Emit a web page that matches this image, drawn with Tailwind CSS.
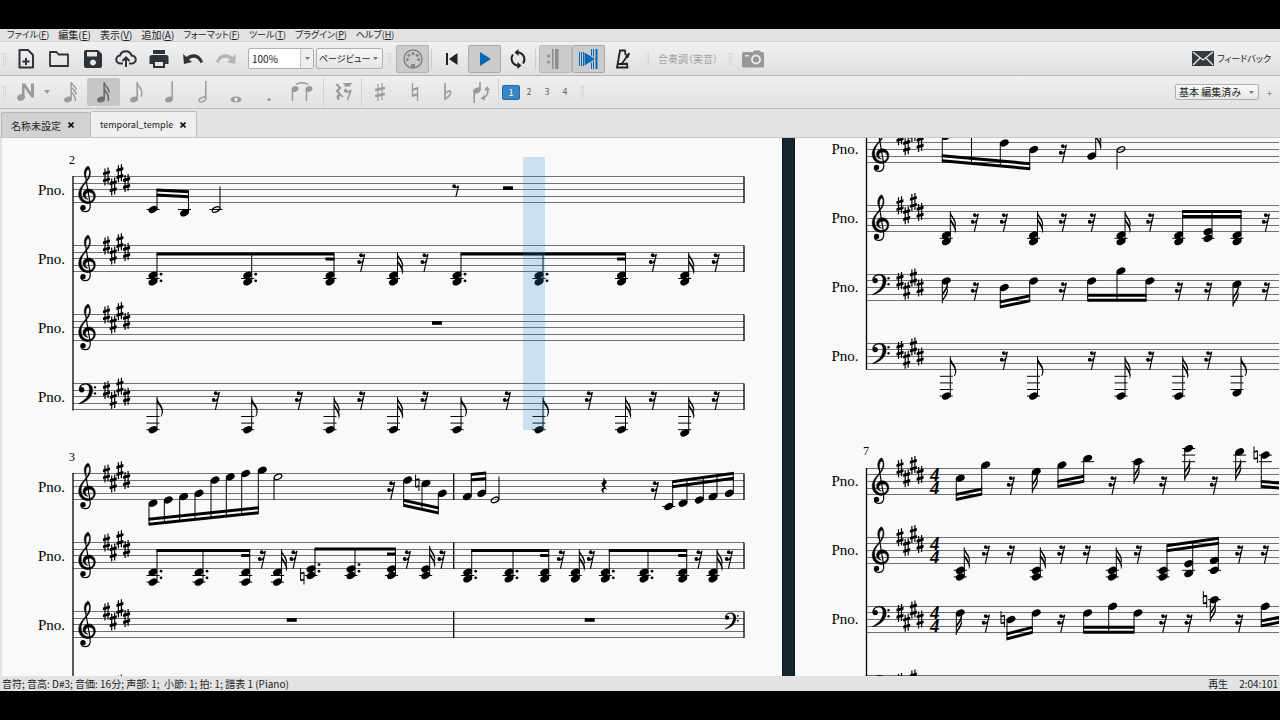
<!DOCTYPE html>
<html lang="ja">
<head>
    <meta charset="UTF-8">
    <meta name="viewport" content="width=device-width, initial-scale=1.0">
    <title>temporal_temple</title>
    <script src="https://cdn.jsdelivr.net/npm/@tailwindcss/browser@4"></script>
    <style>
        body { font-family: 'Noto Sans CJK JP', sans-serif; }
        .kana { font-feature-settings: "palt"; }
    </style>
</head>
<body class="h-screen bg-black py-[29px] flex flex-col overflow-hidden text-[10px] text-[#222]">
    <div class="flex-1 min-h-0 flex flex-col bg-[#e3e3e3]">
        <nav class="kana h-3 shrink-0 flex items-center gap-[9px] pl-[7px] text-[9px] leading-3 whitespace-nowrap">
            <button>ファイル(<u>F</u>)</button>
            <button class="text-[10px]">編集(<u>E</u>)</button>
            <button class="text-[10px]">表示(<u>V</u>)</button>
            <button class="text-[10px]">追加(<u>A</u>)</button>
            <button>フォーマット(<u>F</u>)</button>
            <button>ツール(<u>T</u>)</button>
            <button>プラグイン(<u>P</u>)</button>
            <button>ヘルプ(<u>H</u>)</button>
        </nav>

        <!-- Barra principal -->
        <div class="h-[35px] shrink-0 flex items-center border-t border-b border-t-[#d4d4d4] border-b-[#b5b5b5] bg-linear-to-b from-[#f1f1f1] to-[#dfdfdf]">
            <span class="w-[9px] flex justify-center"><i class="h-3 w-[3px] border-x border-dotted border-[#ccc]"></i></span>
            <div class="w-[234px] flex text-[#2d3338]">
                <button class="flex-1 flex justify-center" aria-label="New"><svg width="20" height="22" viewBox="0 0 20 22" fill="none" stroke="currentColor" stroke-width="2"><path d="M3.500 2h8.500l5 5v12.500h-13.500z" stroke-linejoin="round"/><path d="M10 10v7M6.500 13.500h7"/></svg></button>
                <button class="flex-1 flex justify-center" aria-label="Open"><svg width="20" height="22" viewBox="0 0 20 22" fill="none" stroke="currentColor" stroke-width="1.800" stroke-linejoin="round"><path d="M1 18V4h6.500l2 2.500H19V18H1z"/></svg></button>
                <button class="flex-1 flex justify-center" aria-label="Save"><svg width="20" height="22" viewBox="0 0 20 22" fill="currentColor"><path fill-rule="evenodd" d="M3 2h12l4 4v12a2 2 0 0 1-2 2H3a2 2 0 0 1-2-2V4a2 2 0 0 1 2-2zM4 4v4.500h10V4zM10 11.500a3 3 0 1 0 .01 0z"/></svg></button>
                <button class="flex-1 flex justify-center" aria-label="Upload"><svg width="22" height="22" viewBox="0 0 22 22" fill="none" stroke="currentColor" stroke-width="2"><path d="M8 15.500H5.500a4 4 0 0 1-.5-8A6 6 0 0 1 16.500 7.500a4 4 0 0 1 .5 8H14"/><path d="M11 19V9.500M7.500 13L11 9.500l3.500 3.500"/></svg></button>
                <button class="flex-1 flex justify-center" aria-label="Print"><svg width="20" height="22" viewBox="0 0 20 22" fill="currentColor"><path fill-rule="evenodd" d="M4 2h12v4H4zM3 7h14a2.500 2.500 0 0 1 2.500 2.500V16H16v4H4v-4H.5V9.500A2.500 2.500 0 0 1 3 7zM6 14v4h8v-4z"/></svg></button>
                <button class="flex-1 flex justify-center" aria-label="Undo"><svg width="20" height="22" viewBox="0 0 20 22"><path fill="currentColor" d="M0 6l1 10 8-2-3-2.500C10 8.500 15 9 17.500 15l2.500-1C17 5.500 9 4.500 3.500 9z"/></svg></button>
                <button class="flex-1 flex justify-center text-[#b5b5b5]" aria-label="Redo" disabled><svg width="20" height="22" viewBox="0 0 20 22"><path fill="currentColor" d="M20 6l-1 10-8-2 3-2.500C10 8.500 5 9 2.500 15L0 14C3 5.500 11 4.500 16.500 9z"/></svg></button>
            </div>
            <div class="ml-[5px] w-[66px] h-[21px] flex rounded-xs border border-[#b0b0b0] bg-white">
                <input type="text" value="100%" aria-label="Zoom" class="min-w-0 flex-1 pl-[3px] text-[10px] leading-none outline-none">
                <button class="w-[13px] flex items-center justify-center border-l border-[#c4c4c4] bg-[#eee]" aria-label="Zoom list"><svg width="5" height="3"><path fill="#777" d="M0 0h5L2.500 3z"/></svg></button>
            </div>
            <div class="relative ml-[2px] w-[67px] h-[21px]">
                <select aria-label="View" class="kana w-full h-full appearance-none rounded-xs border border-[#b0b0b0] bg-linear-to-b from-[#f8f8f8] to-[#e4e4e4] pl-[2px] text-[9px]"><option>ページビュー</option></select>
                <svg class="absolute right-[5px] top-[9px]" width="5" height="3"><path fill="#777" d="M0 0h5L2.500 3z"/></svg>
            </div>
            <span class="w-[13px] flex justify-center"><i class="h-3 w-[3px] border-x border-dotted border-[#ccc]"></i></span>
            <button class="w-[33px] h-[28px] flex items-center justify-center rounded-xs border border-[#b4b4b4] bg-[#cbcbcb]" aria-label="MIDI"><svg width="20" height="20" viewBox="0 0 20 20"><circle cx="10" cy="10" r="9" fill="none" stroke="#858585" stroke-width="1.500"/><g fill="#858585"><circle cx="10" cy="4.500" r="1.500"/><circle cx="5.800" cy="6.200" r="1.500"/><circle cx="14.200" cy="6.200" r="1.500"/><circle cx="4.300" cy="10.500" r="1.500"/><circle cx="15.700" cy="10.500" r="1.500"/><path d="M8 18v-3h4v3z"/></g></svg></button>
            <i class="mx-[2px] h-[20px] w-px bg-[#ccc]"></i>
            <button class="w-[34px] flex justify-center" aria-label="Rewind"><svg width="13" height="14" viewBox="0 0 13 14" fill="#222"><path d="M1 1h2v12H1zM12.500 1v12L4 7z"/></svg></button>
            <button class="w-[33px] h-[28px] flex items-center justify-center rounded-xs border border-[#aaa] bg-[#cbcbcb]" aria-label="Play"><svg width="12" height="14" viewBox="0 0 12 14"><path fill="#0868b8" d="M1 0l11 7L1 14z"/></svg></button>
            <button class="w-[34px] flex justify-center" aria-label="Loop"><svg width="18" height="20" viewBox="0 0 18 20" fill="none" stroke="#222" stroke-width="2"><path d="M14 14.500A7 7 0 0 0 10 3.500H8M4 5.500A7 7 0 0 0 8 16.500H10"/><path fill="#222" stroke="none" d="M9.500 0v7L5.500 3.500zM8.500 13v7l4-3.500z"/></svg></button>
            <i class="mr-[3px] h-[20px] w-px bg-[#ccc]"></i>
            <button class="w-[33px] h-[28px] flex items-center justify-center rounded-xs border border-[#bcbcbc] bg-[#cbcbcb]" aria-label="Repeats"><svg width="20" height="20" viewBox="0 0 20 20" fill="#8d8d8d"><circle cx="2.500" cy="7" r="1.500"/><circle cx="2.500" cy="13" r="1.500"/><path d="M6 0h1.500v20H6zM9 0h3.500v20H9z"/></svg></button>
            <button class="w-[33px] h-[28px] flex items-center justify-center rounded-xs border border-[#aaa] bg-[#cbcbcb]" aria-label="Pan score"><svg width="20" height="20" viewBox="0 0 20 20" fill="#0868b8"><path d="M0 3h1v14H0zM2 3h1v14H2zM4 3h1v14H4zM5.500 3.500L16 10 5.500 16.500zM16.500 0h2v20h-2zM12 0h1v7l-1-.6zM14 0h1v8l-1-.6zM12 13.500l1-.6V20h-1zM14 12l1-.6V20h-1z"/></svg></button>
            <button class="ml-px w-[34px] flex justify-center" aria-label="Metronome"><svg width="16" height="20" viewBox="0 0 16 20" fill="none" stroke="#222" stroke-width="1.800"><path d="M10.500 6L10 1.500H5L2 18.500h10.500l-.7-5M2.500 15h9M7 14.500L14.500 4"/><path d="M11 6l2.500 2" stroke-width="3"/></svg></button>
            <span class="w-[14px] flex justify-center"><i class="h-3 w-[3px] border-x border-dotted border-[#ccc]"></i></span>
            <button class="kana ml-1 whitespace-nowrap text-[10px] text-[#a3a3a3]" disabled>合奏調（実音）</button>
            <span class="w-[24px] flex justify-center"><i class="h-3 w-[3px] border-x border-dotted border-[#ccc]"></i></span>
            <button aria-label="Screenshot"><svg width="22" height="18" viewBox="0 0 22 18"><path fill="#979797" d="M1.500 2H11l1-1.500h6L19 2h1.500A1.500 1.500 0 0 1 22 3.500V16a1.500 1.500 0 0 1-1.500 1.500h-19A1.500 1.500 0 0 1 0 16V3.500A1.500 1.500 0 0 1 1.500 2z"/><circle cx="14" cy="9.500" r="4" fill="#979797" stroke="#e9e9e9" stroke-width="2"/><path fill="#e9e9e9" d="M3 5h4v1.500H3z"/></svg></button>
            <button class="kana ml-auto mr-[9px] flex items-center gap-[3px] whitespace-nowrap text-[9px]"><svg width="22" height="15" viewBox="0 0 22 15"><path fill="#343b40" d="M0 0h22v15H0z"/><path fill="none" stroke="#eee" stroke-width="1.300" d="M1 1l10 8L21 1M1 14l7-7M21 14l-7-7"/></svg>フィードバック</button>
        </div>

        <!-- Barra de notas -->
        <div class="h-[33px] shrink-0 flex items-center border-b border-[#bdbdbd] bg-linear-to-b from-[#efefef] to-[#e2e2e2] text-[#9a9a9a]">
            <span class="w-[9px] flex justify-center"><i class="h-3 w-[3px] border-x border-dotted border-[#ccc]"></i></span>
            <button class="w-[34px] flex justify-center" aria-label="Note input"><svg width="18" height="20" viewBox="0 0 18 20" fill="currentColor"><ellipse cx="4" cy="15.500" rx="4" ry="3.200" transform="rotate(-20 4 15.500)"/><path d="M5 1.500h3l6 9V1.500h3v14h-2.500L7.500 6v9.500H5z"/></svg></button>
            <svg class="mx-px" width="6" height="4"><path fill="currentColor" d="M0 0h6L3 4z"/></svg>
            <div class="w-[264px] flex items-center ml-[3px]">
                <button class="flex-1 flex justify-center" aria-label="32nd"><svg width="14" height="22" viewBox="0 0 14 22"><ellipse cx="4" cy="18.500" rx="4" ry="2.800" transform="rotate(-20 4 18.500)" fill="currentColor"/><path d="M7.200 1v17M7.200 1c.5 3 5 4 5 8M7.200 5.500c.5 3 5 4 5 8M7.200 10c.5 3 5.500 5 4 10" fill="none" stroke="currentColor" stroke-width="1.400"/></svg></button>
                <button class="flex-1 h-[28px] flex items-center justify-center rounded-xs bg-[#c6c6c6] text-[#6d6d6d]" aria-label="16th"><svg width="14" height="22" viewBox="0 0 14 22"><ellipse cx="4" cy="18.500" rx="4" ry="2.800" transform="rotate(-20 4 18.500)" fill="currentColor"/><path d="M7.200 1v17M7.200 1.500c.5 4 5 5 5 10M7.200 7c.5 4 5.500 6 4 13" fill="none" stroke="currentColor" stroke-width="1.700"/></svg></button>
                <button class="flex-1 flex justify-center" aria-label="8th"><svg width="14" height="22" viewBox="0 0 14 22"><ellipse cx="4" cy="18.500" rx="4" ry="2.800" transform="rotate(-20 4 18.500)" fill="currentColor"/><path d="M7.200 1v17M7.200 1.500c.5 5 7 6 4 14" fill="none" stroke="currentColor" stroke-width="1.500"/></svg></button>
                <button class="flex-1 flex justify-center" aria-label="Quarter"><svg width="10" height="22" viewBox="0 0 10 22"><ellipse cx="4" cy="18.500" rx="4" ry="2.800" transform="rotate(-20 4 18.500)" fill="currentColor"/><path d="M7.200 0v18" stroke="currentColor" stroke-width="1.500"/></svg></button>
                <button class="flex-1 flex justify-center" aria-label="Half"><svg width="10" height="22" viewBox="0 0 10 22" fill="none" stroke="currentColor" stroke-width="1.500"><ellipse cx="4.500" cy="18.500" rx="3.500" ry="2" transform="rotate(-25 4.500 18.500)"/><path d="M7.800 0v18"/></svg></button>
                <button class="flex-1 flex justify-center" aria-label="Whole"><svg width="12" height="22" viewBox="0 0 12 22"><path fill="currentColor" fill-rule="evenodd" d="M6 15.500c3 0 5.500 1 5.500 3s-2.500 3-5.500 3-5.500-1-5.500-3 2.500-3 5.500-3zM5.500 16.500c-2 .2-1.500 4 .8 4s2-4.200-.8-4z"/></svg></button>
                <button class="flex-1 flex justify-center" aria-label="Dot"><svg width="4" height="22" viewBox="0 0 4 22"><circle cx="2" cy="18.500" r="1.500" fill="currentColor"/></svg></button>
                <button class="flex-1 flex justify-center" aria-label="Tie"><svg width="22" height="22" viewBox="0 0 22 22"><g fill="currentColor"><ellipse cx="4" cy="8" rx="3.500" ry="2.800" transform="rotate(-20 4 8)"/><ellipse cx="18" cy="8" rx="3.500" ry="2.800" transform="rotate(-20 18 8)"/></g><path d="M1.500 8v12M15.500 8v12M5 3.500c3-2.500 9-2.500 12 0" fill="none" stroke="currentColor" stroke-width="1.500"/></svg></button>
            </div>
            <i class="ml-[5px] h-[28px] w-px bg-[#d2d2d2]"></i>
            <button class="w-[37px] flex justify-center" aria-label="Rest"><svg width="18" height="20" viewBox="0 0 18 20" fill="none" stroke="currentColor"><path stroke-width="2.200" d="M2.500 2l3.500 4-3 3 4 4.500c-4-1-4.500 2-1.500 4"/><path fill="currentColor" stroke="none" d="M10.500 1h6v3.500h-6z"/><path d="M9 1.500h9" /><path stroke-width="1.700" d="M11 8.500c1 2 4 2 6-.5l-3.500 10"/><circle cx="11.500" cy="8.500" r="1.300" fill="currentColor"/></svg></button>
            <i class="h-[28px] w-px bg-[#d2d2d2]"></i>
            <button class="w-[36px] flex justify-center" aria-label="Sharp"><svg width="10" height="20" viewBox="0 0 10 20" fill="none" stroke="currentColor"><path stroke-width="1.200" d="M3 2v17M7 1v17"/><path stroke-width="2.300" d="M0 8l10-2M0 14l10-2"/></svg></button>
            <button class="w-[33px] flex justify-center" aria-label="Natural"><svg width="8" height="20" viewBox="0 0 8 20" fill="none" stroke="currentColor"><path stroke-width="1.300" d="M1.500 1v14M6.500 5v14"/><path stroke-width="2" d="M1 8l6-2M1 14l6-2"/></svg></button>
            <button class="w-[33px] flex justify-center" aria-label="Flat"><svg width="8" height="20" viewBox="0 0 8 20" fill="none" stroke="currentColor" stroke-width="1.600"><path d="M1 1v16c4-2.500 6-5 5.500-7S3 9.500 1 11.500"/></svg></button>
            <button class="w-[34px] flex justify-center" aria-label="Flip"><svg width="18" height="22" viewBox="0 0 18 22"><g fill="none" stroke="currentColor" stroke-width="1.600"><path d="M2.200 10v12M8 1v7M15 7c2 5 0 9-4.500 10"/></g><g fill="currentColor"><ellipse cx="5" cy="9.500" rx="4" ry="2.800" transform="rotate(-25 5 9.500)"/><path d="M12 9.500L15 5l3 4zM13 13.500v6l-4.500-2z"/></g></svg></button>
            <i class="h-[28px] w-px bg-[#d2d2d2]"></i>
            <div class="flex items-center text-[9px] text-[#666]">
                <button class="ml-[3px] w-[18px] h-[15px] rounded-xs border border-[#1e6aa8] bg-[#3a87c8] text-white leading-none">1</button>
                <button class="w-[18px]">2</button>
                <button class="w-[18px]">3</button>
                <button class="w-[18px]">4</button>
            </div>
            <span class="ml-[4px] w-[9px] flex justify-center"><i class="h-3 w-[3px] border-x border-dotted border-[#ccc]"></i></span>
            <div class="relative ml-auto w-[84px] h-[16px]">
                <select aria-label="Workspace" class="kana w-full h-full appearance-none rounded-xs border border-[#b0b0b0] bg-linear-to-b from-[#fafafa] to-[#e6e6e6] pl-[3px] text-[10px] leading-none text-[#222]"><option>基本 編集済み</option></select>
                <svg class="absolute right-[5px] top-[7px]" width="5" height="3"><path fill="#777" d="M0 0h5L2.500 3z"/></svg>
            </div>
            <button class="w-[21px] text-[10px] text-[#888]" aria-label="Add workspace">+</button>
        </div>

        <!-- Pestañas -->
        <div class="h-[29px] shrink-0 flex items-end border-b border-[#c4c4c4] pl-px">
            <div class="h-[25px] w-[90px] flex items-center border border-b-0 border-[#b8b8b8] bg-[#d2d2d2] pl-[9px] gap-[7px] rounded-t-xs"><button class="whitespace-nowrap">名称未設定</button><button aria-label="Close"><svg width="6" height="6" viewBox="0 0 6 6"><path stroke="#111" stroke-width="1.600" d="M.5.5l5 5M5.500.5l-5 5"/></svg></button></div>
            <div class="h-[26px] w-[106px] flex items-center border border-l-0 border-b-0 border-[#bcbcbc] bg-[#efefef] pl-[9px] gap-[7px] rounded-t-xs"><button class="text-[9px]">temporal_temple</button><button aria-label="Close"><svg width="6" height="6" viewBox="0 0 6 6"><path stroke="#111" stroke-width="1.600" d="M.5.5l5 5M5.500.5l-5 5"/></svg></button></div>
        </div>

        <!-- Partitura -->
        <main class="flex-1 min-h-0 flex overflow-hidden bg-[#f9f9f9] border-l-2 border-[#e3e3e3]">
            <svg id="page1" class="block shrink-0" width="780" height="538" viewBox="2 138 780 538"></svg>
            <div class="w-[13px] shrink-0 bg-[#13252f] border-x border-[#0a161d]"></div>
            <svg id="page2" class="block shrink-0" width="484" height="538" viewBox="795 138 484 538"></svg>
        </main>

        <footer class="h-[15px] shrink-0 flex items-center px-[2px] text-[10px] leading-[15px] whitespace-pre">
            <span>音符; 音高: D#3; 音価: 16分; 声部: 1;  小節: 1; 拍: 1; 譜表 1 (Piano)</span>
            <span class="ml-auto">再生</span>
            <span class="ml-[11px]">2:04:101</span>
        </footer>
    </div>

    <svg width="0" height="0" class="absolute">
        <defs>
            <g id="treble" transform="scale(.3333) translate(-263 -169)">
                <path stroke="#000" stroke-width="1.500" d="M255 113C249 95 256 82 264 78C271 84 274 100 268 113C262 125 250 134 245 147C240 163 246 184 264 185C276 185 282 177 281 168C280 160 274 157 268 157C260 157 255 163 256 169C257 173 260 176 264 178C255 177 249 172 249 164C249 154 257 146 267 147C279 148 286 157 286 168C286 181 276 191 262 191C246 190 236 178 236 162C237 144 250 133 258 122C266 112 270 101 268 93C266 85 260 89 258 98C257 104 258 108 259 113Z"/>
                <path d="M257 112L270 190C273 207 266 215 257 215C249 215 243 210 243 203" fill="none" stroke="#000" stroke-width="3.500"/>
                <circle cx="249" cy="203" r="8"/>
            </g>
            <g id="bass" transform="scale(.3333) translate(-263 -301)">
                <path stroke="#000" d="M237 298C238 286 248 281 258 281C272 281 279 290 278 303C277 322 260 337 238 343L237 341C254 332 267 320 268 301C269 289 264 284 256 284C249 284 243 287 242 293Z"/>
                <circle cx="245" cy="300" r="8"/><circle cx="285" cy="293" r="3.500"/><circle cx="285" cy="311" r="3.500"/>
            </g>
            <g id="sharp"><path d="M-1.500-8v17M1.500-9v17" stroke="#000" stroke-width="1.200"/><path d="M-3.500-1.200l7-2v-2.900l-7 2zM-3.500 5.800l7-2V.9l-7 2z"/></g>
            <g id="natural" fill="none" stroke="#000"><path d="M-1.700-8.500v12.500M1.700-4.500v12.500"/><path stroke-width="1.800" d="M-1.700-3l3.400-1M-1.700 4l3.400-1"/></g>
            <g id="flag1"><path transform="scale(.3333)" d="M0 0C2 16 18 24 18 42C18 48 16 54 13 59L11 58C15 50 16 40 10 31C7 26 3 22 0 19Z"/></g>
            <g id="flag2"><path transform="scale(.3333)" d="M0 0C3 15 17 21 17 39L15 47C15 34 8 23 0 12ZM0 18C3 33 19 40 17 58L14 67C15 52 8 42 0 31Z"/></g>
            <g id="r16" transform="scale(.3333)"><circle cx="0" cy="29" r="5.500"/><circle cx="-6" cy="49" r="5.500"/><path d="M11 26L-1 79M-3 32C4 34 9 31 11 25M-9 52C-2 54 3 51 6 44" fill="none" stroke="#000" stroke-width="3.500"/></g>
            <g id="r8" transform="scale(.3333)"><circle cx="-4" cy="29" r="5.500"/><path d="M9 29L1 61M-6 33C2 34 7 33 9 28" fill="none" stroke="#000" stroke-width="3.500"/></g>
            <path id="r4" transform="scale(.3333)" d="M-5 10L8 26C-1 36 1 38 9 49C-2 43 -6 50 1 61C-12 54-11 42 -1 43L-9 31C-1 22 0 20 -5 10Z"/>
            <path id="r2" d="M-5 9.800h10v3.600h-10z"/>
            <path id="r1" d="M-5 6.600h10v3.700h-10z"/>
        </defs>
    </svg>

    <script>
        const GAP = 3.3; // media distancia entre líneas

        // Pentagrama vacío con clave y armadura
        function staff(x, x2, top, clef) {
            let s = '';
            for (let i = 0; i < 5; i++) {
                s += `<path d="M${x} ${top + i * 2 * GAP}H${x2}" stroke="#707070" shape-rendering="crispEdges"/>`;
            }
            s += `<use href="#${clef}" x="${x + 14.7}" y="${top + (clef === 'treble' ? 6 : 2) * GAP}"/>`;
            const shift = clef === 'treble' ? 0 : 2;
            [0, 3, -1, 2].forEach((p, i) => {
                s += `<use href="#sharp" x="${x + 33.5 + i * 6.7}" y="${top + (p + shift) * GAP}"/>`;
            });
            if (top < 660) s += `<text x="${x - 35}" y="${top + 18}" font-size="15">Pno.</text>`;
            return s;
        }

        // Nota o acorde: end = extremo de la plica, o.f = corchetes, o.d = puntillos
        function note(top, x, ps, end, o = {}) {
            let s = '';
            const ys = ps.map(p => top + p * GAP);
            const up = end < ys[0];
            const sx = up ? x + 4 : x - 4;
            for (let p = 10; p <= Math.max(...ps); p += 2) s += `<path d="M${x - 6.5} ${top + p * GAP}h13" stroke="#000"/>`;
            for (let p = -2; p >= Math.min(...ps); p -= 2) s += `<path d="M${x - 6.5} ${top + p * GAP}h13" stroke="#000"/>`;
            ys.forEach(y => {
                s += o.half
                    ? `<ellipse cx="${x}" cy="${y}" rx="4" ry="2.400" transform="rotate(-25 ${x} ${y})" fill="none" stroke="#000" stroke-width="1.300"/>`
                    : `<ellipse cx="${x}" cy="${y}" rx="4.700" ry="3.200" transform="rotate(-27 ${x} ${y})"/>`;
            });
            s += `<path d="M${sx} ${up ? Math.max(...ys) - 1 : Math.min(...ys) + 1}V${end}" stroke="#000"/>`;
            if (o.f) s += `<use href="#flag${o.f}" transform="translate(${sx} ${end})${up ? '' : ' scale(1 -1)'}"/>`;
            (o.d || []).forEach(p => { s += `<circle cx="${x + 8}" cy="${top + p * GAP - 1}" r="1.400"/>`; });
            return s;
        }

        const beam = (x1, y1, x2, y2) => `<path d="M${x1 - .5} ${y1 - 1.5}L${x2 + .5} ${y2 - 1.5}v3L${x1 - .5} ${y1 + 1.5}z"/>`;
        const rests = (id, top, xs) => xs.map(x => `<use href="#${id}" x="${x}" y="${top}"/>`).join('');
        const bar = (x, y1, y2) => `<path d="M${x} ${y1}V${y2}" stroke="#000" stroke-width="1.300"/>`;
        const nat = (x, y) => `<use href="#natural" x="${x}" y="${y}"/>`;
        const num = (x, y, n) => `<text x="${x}" y="${y}" font-size="12">${n}</text>`;
        const meter = top => `<text x="930" y="${top + 13}" font-size="19" font-weight="bold" font-style="italic">4</text><text x="930" y="${top + 26}" font-size="19" font-weight="bold" font-style="italic">4</text>`;

        // Grupo corchea con puntillo + corchea con puntillo + semicorchea
        function dotted(top, xs, ps, dots, y) {
            return note(top, xs[0], ps, y, { d: dots }) + note(top, xs[1], ps, y, { d: dots }) + note(top, xs[2], ps, y)
                + beam(xs[0] + 4, y, xs[2] + 4, y) + beam(xs[2] - 4, y + 5, xs[2] + 4, y + 5);
        }

        // ---------- Página izquierda ----------
        let a = num(69, 164, 2) + num(69, 461, 3);
        [[176.5, 'treble'], [245.5, 'treble'], [314.5, 'treble'], [383.5, 'bass'],
         [473.5, 'treble'], [542.5, 'treble'], [611.5, 'treble'], [680.5, 'bass']].forEach(([t, c]) => {
            a += staff(73, 744, t, c) + bar(744, t, t + 26.4);
            if (t > 470) a += bar(453.7, t, t + 26.4);
        });
        a += bar(73, 176, 410.5) + bar(73, 473, 700);

        let t = 176.5;
        a += note(t, 153, [10], 190) + note(t, 184.5, [11], 192) + beam(157, 190, 188.5, 191.7) + beam(157, 195, 188.5, 196.7);
        a += note(t, 216, [10], 186.5, { half: 1 }) + rests('r8', t, [455.5]) + rests('r2', t, [508]);

        t = 245.5;
        a += dotted(t, [153, 247.7, 330], [9, 11], [9, 11], 254) + dotted(t, [457, 539, 621.5], [9, 11], [9, 11], 254);
        a += note(t, 393.5, [9, 11], 252.7, { f: 2 }) + note(t, 684.7, [9, 11], 252.7, { f: 2 });
        a += rests('r16', t, [361, 424.3, 652.7, 715.5]);

        a += rests('r1', 314.5, [437]);

        t = 383.5;
        [153, 247.7, 457, 539].forEach(x => { a += note(t, x, [14], 397, { f: 1 }); });
        [330, 393.5, 621.5].forEach(x => { a += note(t, x, [14], 397, { f: 2 }); });
        a += note(t, 684.7, [15], 397, { f: 2 });
        a += rests('r16', t, [215.7, 298.7, 361, 424.3, 506.7, 588.7, 652.7, 715.5]);

        t = 473.5;
        [[153, 9], [168.3, 8], [183.7, 7], [199, 6], [215, 2], [230.3, 1], [245.7, 0], [262.3, -1]].forEach(([x, p]) => {
            a += note(t, x, [p], 524 - (x - 153) * .106);
        });
        a += beam(149, 524.3, 258.3, 512.7) + beam(149, 519.3, 258.3, 507.7);
        a += note(t, 278, [1], 500, { half: 1 }) + rests('r16', t, [391, 654.7]) + rests('r4', t, [604.3]);
        a += note(t, 407.7, [2], 505) + nat(417.3, 483) + note(t, 426, [3], 509) + note(t, 442.3, [6], 513);
        a += beam(403.7, 505.3, 438.3, 513) + beam(403.7, 500.3, 438.3, 508);
        a += note(t, 467.3, [7], 474) + note(t, 481.7, [6], 473) + beam(471.3, 474.5, 485.7, 473) + beam(471.3, 480, 485.7, 478.5);
        a += note(t, 495, [8], 476.5, { half: 1 });
        [[668.7, 10], [683, 9], [699.3, 8], [713, 7], [729.3, 6]].forEach(([x, p]) => {
            a += note(t, x, [p], 481.7 - (x - 668.7) * .138);
        });
        a += beam(672.7, 481.7, 733.3, 473.3) + beam(672.7, 486.7, 733.3, 478.3);

        t = 542.5;
        a += dotted(t, [153, 199, 245.7], [9, 12], [9, 11], 550.5) + note(t, 277.5, [9, 12], 549.3, { f: 2 });
        a += nat(302.3, 576.5) + dotted(t, [311, 351, 391.5], [8, 10], [7, 9], 549) + note(t, 425.7, [8, 10], 546, { f: 2 });
        a += dotted(t, [467.7, 509, 544.7], [9, 11], [9, 11], 550.5) + note(t, 575.3, [9, 11], 549.3, { f: 2 });
        a += dotted(t, [605.3, 644, 682.7], [9, 11], [9, 11], 550.5) + note(t, 713, [9, 11], 549.3, { f: 2 });
        a += rests('r16', t, [261.7, 293.3, 406.7, 441.3, 560.7, 590.7, 698.3, 728.7]);

        a += rests('r1', 611.5, [291.7, 589.7]) + '<use href="#bass" transform="translate(732 618) scale(.8)"/>';
        a += '<path d="M523 157h22v273h-22z" fill="#2b87c8" fill-opacity=".22"/>';

        // ---------- Página derecha ----------
        let b = num(863, 455, 7);
        [[136.3, 'treble'], [205.3, 'treble'], [274.3, 'bass'], [343.3, 'bass'],
         [468.3, 'treble'], [537.3, 'treble'], [606.3, 'bass'], [675.3, 'bass']].forEach(([t, c]) => {
            b += staff(866.5, 1279, t, c);
            if (t > 400 && t < 660) b += meter(t);
        });
        b += bar(866.5, 130, 369.7) + bar(866.5, 468, 700);

        t = 136.3;
        b += note(t, 946.3, [0], 160.7) + note(t, 975.5, [-3], 163) + note(t, 1004.3, [2], 166) + note(t, 1033.7, [4], 169);
        b += beam(942.3, 160.7, 1029.7, 168.7) + beam(942.3, 155.7, 1029.7, 163.7);
        b += rests('r16', t, [1062.7]) + note(t, 1091.7, [6], 128, { f: 2 }) + note(t, 1121, [4], 169.5, { half: 1 });

        t = 205.3;
        [946.3, 1033.5, 1121].forEach(x => { b += note(t, x, [9, 11], 211.3, { f: 2 }); });
        b += note(t, 1178.7, [9, 11], 211) + note(t, 1208, [8, 10], 211) + note(t, 1237, [9, 11], 211);
        b += beam(1182.7, 211.5, 1241, 211.5) + beam(1182.7, 216.5, 1241, 216.5);
        b += rests('r16', t, [974.7, 1003.7, 1062.7, 1091.7, 1150, 1265.7]);

        t = 274.3;
        b += note(t, 946.3, [2], 303.3, { f: 2 }) + note(t, 1004.3, [4], 306.7) + note(t, 1033.7, [2], 301);
        b += beam(1000.3, 307, 1029.7, 300.7) + beam(1000.3, 302, 1029.7, 295.7);
        b += note(t, 1091.7, [2], 300) + note(t, 1121, [-1], 300) + note(t, 1150, [2], 300);
        b += beam(1087.7, 300.3, 1146, 300.3) + beam(1087.7, 295.3, 1146, 295.3) + note(t, 1237, [3], 306.7, { f: 2 });
        b += rests('r16', t, [974.7, 1062.7, 1178.7, 1208, 1265.7]);

        t = 343.3;
        b += note(t, 946.3, [16], 356.7, { f: 1 }) + note(t, 1033.5, [16], 356.7, { f: 1 }) + note(t, 1237, [15], 356.7, { f: 1 });
        b += note(t, 1121, [16], 356.7, { f: 2 }) + note(t, 1178.7, [16], 356.7, { f: 2 });
        b += rests('r16', t, [1003.7, 1091.7, 1150, 1208]);

        t = 468.3;
        b += note(t, 960.3, [3], 499) + note(t, 985.7, [-1], 494) + beam(956.3, 499.5, 981.7, 494) + beam(956.3, 494.5, 981.7, 489);
        b += note(t, 1036.3, [1], 493.3, { f: 2 });
        b += note(t, 1062, [-1], 486) + note(t, 1087.7, [-3], 481) + beam(1058, 486.5, 1083.7, 481.3) + beam(1058, 481.5, 1083.7, 476.3);
        b += note(t, 1138, [-2], 484, { f: 2 }) + note(t, 1188.7, [-6], 480.7, { f: 2 }) + note(t, 1239.7, [-5], 480.7, { f: 2 });
        b += nat(1255.7, 455) + note(t, 1265.3, [-4], 487) + beam(1261.3, 486.5, 1280, 488) + beam(1261.3, 481.5, 1280, 483);
        b += rests('r16', t, [1010.7, 1112.3, 1163, 1213.7]);

        t = 537.3;
        [960.3, 1036.3, 1112.3].forEach(x => { b += note(t, x, [10, 12], 547.3, { f: 2 }); });
        b += note(t, 1163, [10, 12], 545.7) + note(t, 1188.7, [8, 11], 542) + note(t, 1214.3, [7, 10], 538);
        b += beam(1167, 545.7, 1218.3, 538.3) + beam(1167, 550.7, 1218.3, 543.3);
        b += rests('r16', t, [985.7, 1010.7, 1061, 1086.7, 1137.7, 1239, 1264.7]);

        t = 606.3;
        b += note(t, 960.3, [2], 635, { f: 2 }) + nat(1002.7, 619.5) + note(t, 1011, [4], 639) + note(t, 1036.3, [2], 632);
        b += beam(1007, 639, 1032.3, 632.3) + beam(1007, 634, 1032.3, 627.3);
        b += note(t, 1087.7, [2], 632) + note(t, 1112.7, [0], 632) + note(t, 1138, [2], 632);
        b += beam(1083.7, 632.3, 1134, 632.3) + beam(1083.7, 627.3, 1134, 627.3);
        b += nat(1205, 599.7) + note(t, 1214.3, [-2], 622, { f: 2 }) + note(t, 1265.3, [0], 626);
        b += beam(1261.3, 626, 1280, 622) + beam(1261.3, 621, 1280, 617);
        b += rests('r16', t, [985.7, 1061, 1163, 1188.3, 1239]);

        const wrap = s => `<g font-family="Liberation Serif, serif">${s}</g>`;
        document.getElementById('page1').innerHTML = wrap(a);
        document.getElementById('page2').innerHTML = wrap(b);
    </script>
</body>
</html>
